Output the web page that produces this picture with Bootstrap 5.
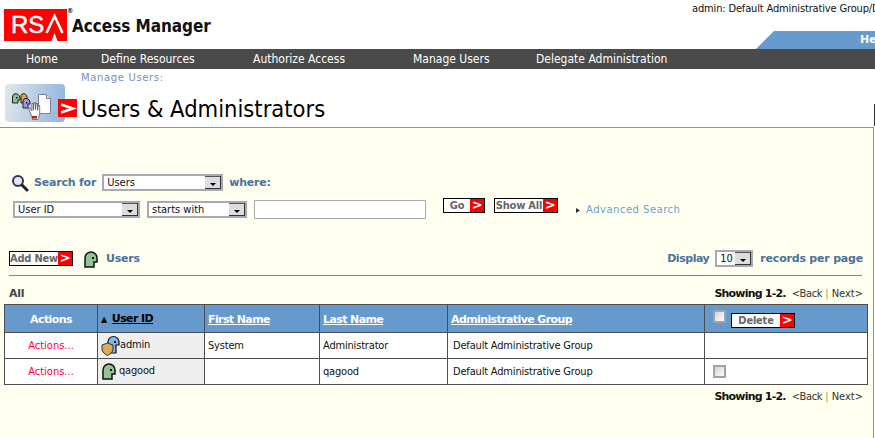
<!DOCTYPE html>
<html lang="en">
<head>
<meta charset="utf-8">
<title>RSA Access Manager</title>
<link href="https://cdn.jsdelivr.net/npm/bootstrap@5.3.0/dist/css/bootstrap.min.css" rel="stylesheet">
<style>
html,body{height:100%;overflow:hidden}
body{font-family:"DejaVu Sans Condensed","DejaVu Sans",sans-serif;font-size:11px;color:#111;background:#fff;width:875px}
.hdr{height:49px}
.rsa-logo{width:63px;height:32px;margin:9px 0 0 4px;background:#f00;color:#fff;font:400 24px/32px "Liberation Sans",sans-serif;-webkit-text-stroke:.5px #fff;padding-left:7px;gap:1px}
.reg{font-size:7px;line-height:7px;margin:8px 0 0 0;width:6px;font-weight:700}
.prod{font:700 17px/20px "DejaVu Sans Condensed",sans-serif;margin:16px 0 0 -1px;letter-spacing:-.05px}
.hdr-right{width:183px;overflow:hidden}
.who{white-space:nowrap;font:11px/14px "DejaVu Sans Condensed",sans-serif;letter-spacing:-.15px;padding-top:2px;color:#111}
.help-tab{margin-left:64px;height:18px;width:119px;background:#69c;clip-path:polygon(18px 0,100% 0,100% 100%,0 100%);color:#fff;font:700 11px/18px "DejaVu Sans",sans-serif;padding-left:104px;overflow:hidden;margin-top:auto}
.mainnav{height:20px;background:#4a4a4a;color:#fff;font:12px/19px "DejaVu Sans Condensed",sans-serif;padding:1px 0 0 26px}
.mainnav a{color:#fff;text-decoration:none;white-space:nowrap}
.n1{width:75px}.n2{width:152px}.n3{width:160px}.n4{width:123px}
.crumb{font:10px/11px "DejaVu Sans",sans-serif;letter-spacing:.65px;color:#7390c4;padding:3px 0 0 81px;height:14px}
.titlerow{height:44px;padding-left:5px;position:relative}
.ticon{width:60px;height:38px;margin-top:1px;border-radius:4px;background:linear-gradient(100deg,#e3e6ea,#8db5de)}
.gt{background:#f00;display:block}
.gt-big{width:19px;height:18px;margin:16px 0 0 -7px}
h1.ttl{font:23.500px/30px "DejaVu Sans Condensed",sans-serif;margin:11px 0 0 4px;color:#000}
.tick{width:1px;height:22px;background:#333;margin:21px 0 0 auto}
.workarea{background:#fffff0;border-top:1px solid #69c;border-right:1px solid #69c;width:874px;height:312px;position:relative}
.lbl{font:700 11px/16px "DejaVu Sans",sans-serif;color:#4a729e;letter-spacing:-.2px;white-space:nowrap}
.lbl-s{padding-top:1px}
.sel{appearance:none;border:2px solid #a9a9b2;border-radius:0;height:17px;padding:0 0 0 3px;font:11px/13px "DejaVu Sans Condensed",sans-serif;color:#111;background:#fff url("data:image/svg+xml,%3Csvg xmlns='http://www.w3.org/2000/svg' width='16' height='13'%3E%3Crect width='16' height='13' fill='%23ddd'/%3E%3Cpath d='M0 .5H15.5V13' fill='none' stroke='%23555'/%3E%3Cpath d='M0 12.5H16M15.5 0V13' stroke='%23333' fill='none'/%3E%3Cpath d='M5 7h6l-3 3z' fill='%23000'/%3E%3C/svg%3E") no-repeat right top;box-shadow:none;display:block}
.row1{padding:46px 0 0 11px;height:73px}
.row2{padding:0 0 0 13px;height:44px}
.txt{width:172px;height:19px;border:1px solid #a9a9b2;background:#fff;margin:-1px 0 0 7px}
.rbtn{display:inline-flex;align-items:stretch;border:1px solid #000;background:#fff;height:15px;padding:1px 0 0;border-radius:0;color:#666;font:700 11px/12px "DejaVu Sans Condensed",sans-serif;letter-spacing:-.2px;white-space:nowrap;overflow:hidden}
.rbtn .t{flex:1;text-align:center}
.rbtn .r{width:14px;background:#f00;color:#fff;font:700 13px/12px "DejaVu Sans",sans-serif;text-align:center;margin-top:-1px}
.adv{font:10px/12px "DejaVu Sans",sans-serif;letter-spacing:.5px;color:#6b9fd4;text-decoration:none;white-space:nowrap}
.bul{width:4px;height:5px;margin:0 6px 0 18px;background:#333;clip-path:polygon(0 0,100% 50%,0 100%)}
.row3{padding:0 10px 0 9px;height:16px;margin-top:6px}
.hrule{height:1px;background:#888;margin:8px 11px 0 9px}
.allrow{padding:11px 11px 0 9px;height:28px}
.allt{font:700 11px/14px "DejaVu Sans",sans-serif;color:#444;letter-spacing:-.3px}
.showing{font:11px/14px "DejaVu Sans Condensed",sans-serif;white-space:nowrap}
.showing b{font:700 11px/14px "DejaVu Sans",sans-serif;letter-spacing:-.8px;color:#111;margin-right:6px}
.showing i{font-style:normal;color:#c84}
.showing a{color:#333;text-decoration:none}
.showing a.bk{letter-spacing:-.4px}
.grid{width:864px;margin:0 0 0 4px;table-layout:fixed;border-collapse:collapse;--bs-table-bg:transparent;--bs-table-border-color:#4d4d4d;font:11px/14px "DejaVu Sans Condensed",sans-serif;letter-spacing:-.18px}
.grid>:not(caption)>*>*{padding:0 3px;border:1px solid #4d4d4d;vertical-align:middle;box-shadow:none;color:#111}
.grid thead th{background:#69c;height:28px;font:700 11px/14px "DejaVu Sans",sans-serif;letter-spacing:-.6px;color:#fff}
.grid thead th.thtxt{padding-top:2px}
.grid thead a{color:#fff}
.grid thead a.on{color:#000}
.grid tbody td{background:#fff;height:26px}
.grid tbody td.idc{background:#eee}
.grid tbody td.dat{padding-top:1px}
.grid tbody td.grp{padding:1px 3px 0 5px}
.act{color:#f03 !important;text-align:center;letter-spacing:0}
.arrowup{font-size:8px;color:#000;margin-right:2px}
.chk{appearance:none;width:13px;height:13px;border:2px solid #a3a3a3;background:linear-gradient(135deg,#d0d0de,#fff);display:block}
.chk-head{margin:0 5px 0 5px}
.chk-row{margin-left:5px}
.cellname{padding-top:3px}
.cellname2{margin:-2px 0 0 3px}
.gicon{margin-left:1px}
</style>
</head>
<body>
<header class="hdr d-flex">
  <div class="rsa-logo d-flex" aria-label="RSA"><span>RS</span><svg width="20" height="32" viewBox="0 0 20 32"><path d="M1.500 24L9.500 7L17.500 24" fill="none" stroke="#fff" stroke-width="2.600"/><path d="M9.500 24l-3 8h6z" fill="#fff"/></svg></div>
  <div class="reg">®</div>
  <div class="prod">Access Manager</div>
  <div class="hdr-right ms-auto d-flex flex-column">
    <div class="who">admin: Default Administrative Group/Default</div>
    <div class="help-tab">Help</div>
  </div>
</header>
<nav class="mainnav d-flex">
  <a class="n1" href="#">Home</a><a class="n2" href="#">Define Resources</a><a class="n3" href="#">Authorize Access</a><a class="n4" href="#">Manage Users</a><a href="#">Delegate Administration</a>
</nav>
<div class="crumb">Manage Users:</div>
<div class="titlerow d-flex">
  <div class="ticon">
    <svg class="d-block" width="60" height="38" viewBox="0 0 60 38">
      <path d="M17 10a3.500 3.500 0 0 1 5 3v4h-2v2h-4v-6a3.500 3.500 0 0 1 1-3z" fill="#e9a13c" stroke="#222"/>
      <path d="M9 10a4.500 4.500 0 0 1 6 4v2h-2v3H7.500v-6a4.500 4.500 0 0 1 1.500-3z" fill="#8fc08f" stroke="#222"/>
      <rect x="11" y="13" width="1.500" height="1.500" fill="#111"/>
      <path d="M19 15a4 4 0 0 1 6 3v2h-2v4h-5v-6a4 4 0 0 1 1-3z" fill="#9a9ae8" stroke="#222"/>
      <rect x="21" y="18" width="1.500" height="1.500" fill="#111"/>
      <path d="M33.500 10.500h8l4 4v15h-12z" fill="#fff" stroke="#7a7fa0"/>
      <path d="M41.500 10.500v4h4" fill="#dde" stroke="#7a7fa0"/>
      <path d="M27 33l-2-5-1.500-3.500 1.500-.5 2 3v-7.500h1.500v6l.5-7h1.500v7l.5-6h1.500v7l.8-5h1.400v8l-1 4-1 2h-5z" fill="#fff" stroke="#555" stroke-width=".8"/>
      <rect x="27" y="32" width="5" height="2.500" fill="#a22"/>
    </svg>
  </div>
  <span class="gt gt-big"><svg class="d-block" width="19" height="18" viewBox="0 0 19 18"><path d="M3 5.500L15 9.500L3 13.500" fill="none" stroke="#fff" stroke-width="2.600"/></svg></span>
  <h1 class="ttl">Users &amp; Administrators</h1>
  <div class="tick"></div>
</div>
<main class="workarea">
  <div class="row1 d-flex">
    <svg width="18" height="18" viewBox="0 0 18 18"><circle cx="7" cy="7" r="5" fill="#dfe8f2" stroke="#335" stroke-width="2"/><path d="M11 11l5 5" stroke="#223" stroke-width="3" stroke-linecap="round"/></svg>
    <span class="lbl lbl-s" style="margin-left:5px">Search for</span>
    <select class="sel" style="width:121px;margin-left:6px"><option>Users</option></select>
    <span class="lbl lbl-s" style="margin-left:6px">where:</span>
  </div>
  <div class="row2 d-flex">
    <select class="sel" style="width:127px"><option>User ID</option></select>
    <select class="sel" style="width:100px;margin-left:7px"><option>starts with</option></select>
    <div class="txt"></div>
    <button class="rbtn" type="button" style="width:42px;margin:-3px 0 0 17px"><span class="t">Go</span><span class="r">&gt;</span></button>
    <button class="rbtn" type="button" style="width:64px;margin:-3px 0 0 9px"><span class="t">Show All</span><span class="r">&gt;</span></button>
    <span class="bul" style="margin-top:7px"></span>
    <a class="adv" href="#" style="margin-top:3px">Advanced Search</a>
  </div>
  <div class="row3 d-flex align-items-start">
    <button class="rbtn" type="button" style="width:64px"><span class="t">Add New</span><span class="r">&gt;</span></button>
    <svg width="14" height="17" viewBox="0 0 14 17" style="margin:0 8px 0 11px"><path d="M1 16V7a6 6 0 0 1 12 0v4h-3v5z" fill="#93c393" stroke="#111" stroke-width="1.500"/><rect x="8" y="6" width="2" height="2" fill="#111"/></svg>
    <span class="lbl">Users</span>
    <span class="lbl ms-auto" style="letter-spacing:-.45px">Display</span>
    <select class="sel" style="width:38px;margin:-1px 7px 0 6px"><option>10</option></select>
    <span class="lbl">records per page</span>
  </div>
  <div class="hrule"></div>
  <div class="allrow d-flex justify-content-between" style="padding-right:10px">
    <span class="allt">All</span>
    <span class="showing"><b>Showing 1-2.</b><a class="bk" href="#">&lt;Back</a> <i>|</i> <a href="#">Next&gt;</a></span>
  </div>
  <table class="table grid mb-0">
    <colgroup><col style="width:93px"><col style="width:107px"><col style="width:115px"><col style="width:128px"><col style="width:257px"><col></colgroup>
    <thead><tr>
      <th class="thtxt text-center">Actions</th>
      <th class="thtxt"><span class="d-inline-block arrowup">▲</span> <a class="on" href="#">User ID</a></th>
      <th class="thtxt"><a href="#">First Name</a></th>
      <th class="thtxt"><a href="#">Last Name</a></th>
      <th class="thtxt"><a href="#">Administrative Group</a></th>
      <th><div class="d-flex align-items-start"><input class="chk chk-head" type="checkbox" aria-label="Select all"><button class="rbtn" type="button" style="width:64px;margin-top:3px"><span class="t">Delete</span><span class="r">&gt;</span></button></div></th>
    </tr></thead>
    <tbody>
      <tr>
        <td class="act">Actions...</td>
        <td class="idc"><div class="d-flex align-items-start"><svg width="19" height="21" viewBox="0 0 19 21"><path d="M7 18V7a5.500 5.500 0 0 1 11 0v3h-3v8z" fill="#7fb7ee" stroke="#111" stroke-width="1.200"/><rect x="13" y="6" width="2" height="2" fill="#111"/><path d="M1 10l5.500-2 5.500 2v4c0 3-2.500 5-5.500 6.500C3.500 19 1 17 1 14z" fill="#dcaa50" stroke="#333"/></svg><span class="cellname">admin</span></div></td>
        <td class="dat">System</td><td class="dat">Administrator</td><td class="grp">Default Administrative Group</td><td></td>
      </tr>
      <tr>
        <td class="act">Actions...</td>
        <td class="idc"><div class="d-flex align-items-center"><svg class="gicon" width="14" height="17" viewBox="0 0 14 17"><path d="M1 16V7a6 6 0 0 1 12 0v4h-3v5z" fill="#93c393" stroke="#111" stroke-width="1.500"/><rect x="8" y="6" width="2" height="2" fill="#111"/></svg><span class="cellname2">qagood</span></div></td>
        <td></td><td class="dat">qagood</td><td class="grp">Default Administrative Group</td><td><input class="chk chk-row" type="checkbox" aria-label="Select qagood"></td>
      </tr>
    </tbody>
  </table>
  <div class="allrow d-flex justify-content-end" style="padding:5px 10px 0 9px">
    <span class="showing"><b>Showing 1-2.</b><a class="bk" href="#">&lt;Back</a> <i>|</i> <a href="#">Next&gt;</a></span>
  </div>
</main>
<script src="https://cdn.jsdelivr.net/npm/bootstrap@5.3.0/dist/js/bootstrap.bundle.min.js"></script>
</body>
</html>
